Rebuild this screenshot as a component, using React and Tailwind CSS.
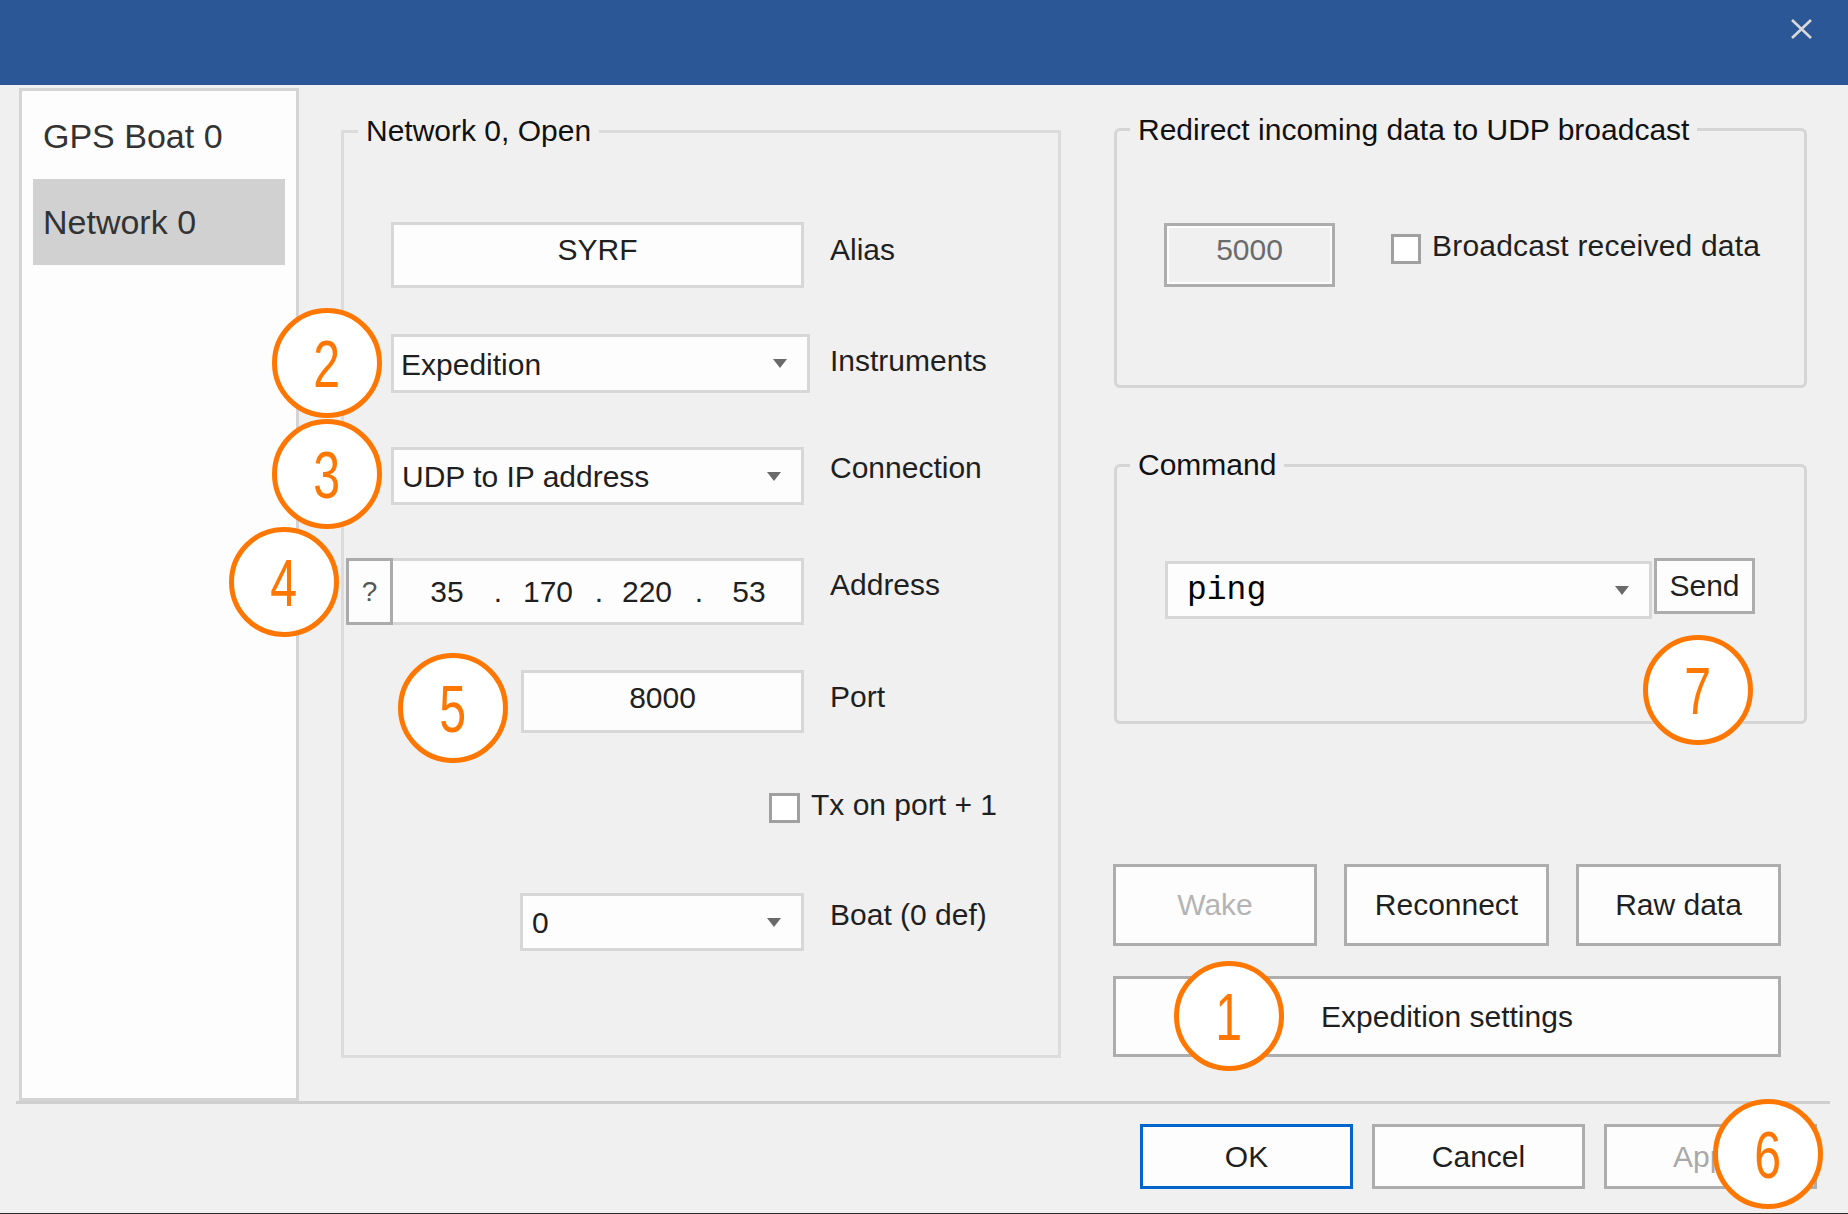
import React from "react";

function Arrow() {
  return (
    <svg width="14" height="9" viewBox="0 0 14 9" className="mr-[20px] shrink-0">
      <polygon points="0,0 14,0 7,9" fill="#6a6a6a" />
    </svg>
  );
}

function Circle({ pos, n }) {
  return (
    <div
      className={`absolute flex h-[110px] w-[110px] items-center justify-center rounded-full border-[5px] border-[#ff7700] bg-white text-[67px] leading-none text-[#ff7700] ${pos}`}
    >
      <span className="inline-block scale-x-[0.72]">{n}</span>
    </div>
  );
}

export default function App() {
  return (
    <div className="relative flex h-[1214px] w-[1848px] flex-col overflow-hidden border-b border-[#2b2b2b] bg-[#f0f0f0] font-['Liberation_Sans',Arial,sans-serif] text-[30px] leading-[30px] text-[#1f1f1f]">
      {/* title bar */}
      <div className="flex h-[85px] shrink-0 items-start justify-end bg-[#2b5797] pr-[36px] pt-[19px]">
        <svg width="21" height="20" viewBox="0 0 21 20">
          <path d="M1 1 L20 19 M20 1 L1 19" stroke="#d9d9d9" strokeWidth="2.6" />
        </svg>
      </div>

      {/* body */}
      <div className="flex h-[1016px] shrink-0 items-start pt-[3px]">
        {/* list */}
        <div className="ml-[19px] h-[1013px] w-[280px] shrink-0 border-[3px] border-[#d4d4d4] bg-[#fdfdfd] px-[11px] pt-[2px] text-[34px] leading-[34px] text-[#333]">
          <div className="flex h-[86px] items-center pl-[10px]">GPS Boat 0</div>
          <div className="flex h-[86px] items-center bg-[#d1d1d1] pl-[10px]">Network 0</div>
        </div>

        {/* left group */}
        <div className="relative ml-[42px] mt-[42px] h-[928px] w-[720px] shrink-0 border-[3px] border-[#dcdcdc]">
          <span className="absolute left-[14px] top-[-17px] bg-[#f0f0f0] px-[8px] text-[#111]">Network 0, Open</span>

          {/* Alias */}
          <div className="mt-[89px] flex items-start pl-[47px]">
            <div className="flex h-[66px] w-[413px] justify-center border-[3px] border-[#d7d7d7] bg-[#fdfdfd] pt-[10px]">SYRF</div>
            <div className="ml-[26px] mt-[13px]">Alias</div>
          </div>

          {/* Instruments */}
          <div className="mt-[46px] flex items-start pl-[47px]">
            <div className="flex h-[59px] w-[419px] items-center border-[3px] border-[#d7d7d7] bg-[#fdfdfd]">
              <div className="flex-1 pl-[7px] pt-[2px]">Expedition</div>
              <Arrow />
            </div>
            <div className="ml-[20px] mt-[12px]">Instruments</div>
          </div>

          {/* Connection */}
          <div className="mt-[54px] flex items-start pl-[47px]">
            <div className="flex h-[58px] w-[413px] items-center border-[3px] border-[#d7d7d7] bg-[#fdfdfd]">
              <div className="flex-1 pl-[8px] pt-[2px]">UDP to IP address</div>
              <Arrow />
            </div>
            <div className="ml-[26px] mt-[6px]">Connection</div>
          </div>

          {/* Address */}
          <div className="mt-[53px] flex items-start pl-[2px]">
            <div className="flex h-[67px] w-[47px] items-center justify-center border-[3px] border-[#ababab] bg-[#fdfdfd] text-[28px] text-[#555]">?</div>
            <div className="flex h-[67px] w-[411px] items-center border-y-[3px] border-r-[3px] border-[#d7d7d7] bg-[#fdfdfd] pl-[9px]">
              <div className="w-[90px] text-center">35</div>
              <div className="w-[12px] text-center">.</div>
              <div className="w-[88px] text-center">170</div>
              <div className="w-[14px] text-center">.</div>
              <div className="w-[82px] text-center">220</div>
              <div className="w-[22px] text-center">.</div>
              <div className="w-[78px] text-center">53</div>
            </div>
            <div className="ml-[26px] mt-[12px]">Address</div>
          </div>

          {/* Port */}
          <div className="mt-[45px] flex items-start pl-[177px]">
            <div className="flex h-[63px] w-[283px] justify-center border-[3px] border-[#d7d7d7] bg-[#fdfdfd] pt-[10px]">8000</div>
            <div className="ml-[26px] mt-[12px]">Port</div>
          </div>

          {/* Tx on port */}
          <div className="mt-[60px] flex items-start pl-[425px]">
            <div className="h-[30px] w-[31px] border-[3px] border-[#a0a0a0] bg-white" />
            <div className="ml-[11px] mt-[-3px]">Tx on port + 1</div>
          </div>

          {/* Boat */}
          <div className="mt-[70px] flex items-start pl-[176px]">
            <div className="flex h-[58px] w-[284px] items-center border-[3px] border-[#d7d7d7] bg-[#fdfdfd]">
              <div className="flex-1 pl-[9px] pt-[2px]">0</div>
              <Arrow />
            </div>
            <div className="ml-[26px] mt-[7px]">Boat (0 def)</div>
          </div>
        </div>

        {/* right column */}
        <div className="ml-[52px] mt-[40px] flex w-[694px] shrink-0 flex-col">
          {/* Redirect group */}
          <div className="relative ml-[1px] h-[260px] w-[693px] rounded-[6px] border-[3px] border-[#d5d5d5]">
            <span className="absolute left-[13px] top-[-16px] bg-[#f0f0f0] px-[8px] text-[#111]">Redirect incoming data to UDP broadcast</span>
            <div className="mt-[92px] flex items-start pl-[47px]">
              <div className="flex h-[64px] w-[171px] justify-center border-[3px] border-[#adadad] bg-[#f0f0f0] pt-[9px] text-[#6b6b6b] shadow-[inset_0_0_0_2px_#fdfdfd]">5000</div>
              <div className="ml-[56px] mt-[11px] h-[30px] w-[30px] border-[3px] border-[#a0a0a0] bg-white" />
              <div className="ml-[11px] mt-[8px] tracking-[0.2px]">Broadcast received data</div>
            </div>
          </div>

          {/* Command group */}
          <div className="relative ml-[1px] mt-[76px] h-[260px] w-[693px] rounded-[6px] border-[3px] border-[#d5d5d5]">
            <span className="absolute left-[13px] top-[-17px] bg-[#f0f0f0] px-[8px] text-[#111]">Command</span>
            <div className="mt-[91px] flex items-start pl-[48px]">
              <div className="mt-[3px] flex h-[58px] w-[487px] items-center border-[3px] border-[#d7d7d7] bg-[#fdfdfd]">
                <div className="flex-1 pl-[19px] font-['Liberation_Mono',monospace] text-[33px] leading-[33px] text-black">ping</div>
                <Arrow />
              </div>
              <div className="ml-[2px] flex h-[56px] w-[101px] items-center justify-center border-[3px] border-[#adadad] bg-[#fdfdfd]">Send</div>
            </div>
          </div>

          {/* buttons row */}
          <div className="mt-[140px] flex items-start">
            <div className="flex h-[82px] w-[204px] items-center justify-center border-[3px] border-[#adadad] bg-[#fdfdfd] text-[#b4b4b4]">Wake</div>
            <div className="ml-[27px] flex h-[82px] w-[205px] items-center justify-center border-[3px] border-[#adadad] bg-[#fdfdfd]">Reconnect</div>
            <div className="ml-[27px] flex h-[82px] w-[205px] items-center justify-center border-[3px] border-[#adadad] bg-[#fdfdfd]">Raw data</div>
          </div>
          <div className="mt-[30px] flex h-[81px] w-[668px] items-center justify-center border-[3px] border-[#adadad] bg-[#fdfdfd]">Expedition settings</div>
        </div>
      </div>

      {/* separator */}
      <div className="ml-[16px] h-[3px] w-[1814px] shrink-0 bg-[#cfcfcf]" />

      {/* bottom buttons */}
      <div className="flex shrink-0 items-start pl-[1140px] pt-[20px]">
        <div className="flex h-[65px] w-[213px] items-center justify-center border-[3px] border-[#0066cc] bg-[#fdfdfd]">OK</div>
        <div className="ml-[19px] flex h-[65px] w-[213px] items-center justify-center border-[3px] border-[#adadad] bg-[#fdfdfd]">Cancel</div>
        <div className="ml-[19px] flex h-[65px] w-[213px] items-center justify-center border-[3px] border-[#adadad] bg-[#fdfdfd] text-[#a9a9a9]">Apply</div>
      </div>

      {/* annotation circles */}
      <Circle pos="left-[1174px] top-[961px]" n="1" />
      <Circle pos="left-[272px] top-[308px]" n="2" />
      <Circle pos="left-[272px] top-[419px]" n="3" />
      <Circle pos="left-[229px] top-[527px]" n="4" />
      <Circle pos="left-[398px] top-[653px]" n="5" />
      <Circle pos="left-[1713px] top-[1099px]" n="6" />
      <Circle pos="left-[1643px] top-[635px]" n="7" />
    </div>
  );
}
